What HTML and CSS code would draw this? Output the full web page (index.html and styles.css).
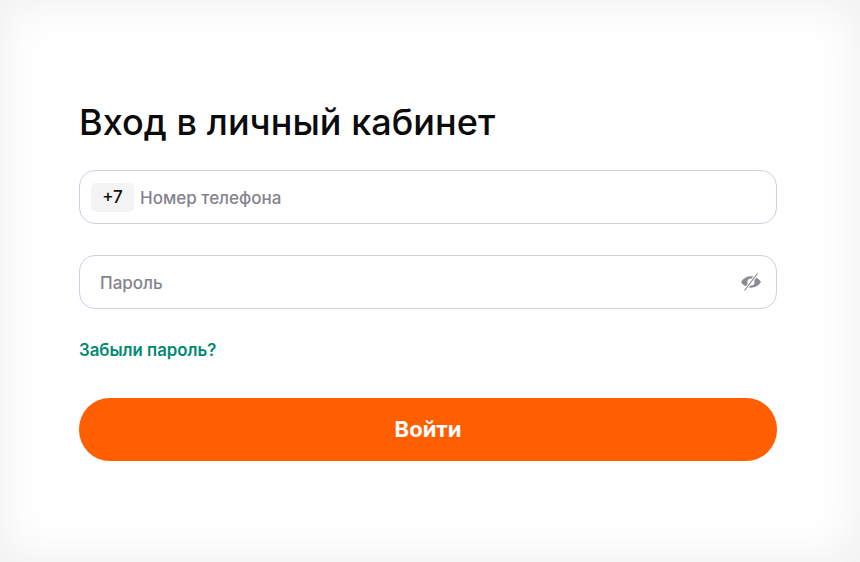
FILE: index.html
```html
<html><head>
    <title>Вход в личный кабинет</title>
    <meta charset="UTF-8">
    <meta name="viewport" content="width=device-width, initial-scale=1">
    <link rel="stylesheet" href="styles.css">
</head>
<body>
  <div class="wrap">
    <h1>Вход в личный кабинет</h1>
    <div class="field">
      <span class="code">+7</span>
      <span class="ph">Номер телефона</span>
    </div>
    <div class="field field-pass">
      <span class="ph">Пароль</span>
      <svg class="eye" width="22" height="20" viewBox="0 0 22 20">
        <path fill="#8a8a94" fill-rule="evenodd" d="M1 10C3.4 6.3 6.9 4.3 11 4.3S18.600 6.300 21 10C18.600 13.700 15.100 15.700 11 15.700S3.400 13.700 1 10ZM11 6.400A3.600 3.600 0 1 0 11 13.600A3.600 3.600 0 1 0 11 6.400Z"/>
        <path stroke="#fff" stroke-width="3" d="M4 19L18 1"/>
        <path stroke="#8a8a94" stroke-width="1.200" d="M4.500 18.500L17.500 1.500"/>
      </svg>
    </div>
    <a class="forgot" href="#">Забыли пароль?</a>
    <button type="button" class="login">Войти</button>
  </div>
</body></html>
```

FILE: styles.css
```css
html, body {
  margin: 0;
  height: 100%;
}
body {
  background: #fff;
  box-shadow: inset 0 0 50px rgba(0, 0, 0, 0.07);
  font-family: "Inter", "Noto Sans", sans-serif;
  overflow: hidden;
}
.wrap {
  display: flex;
  flex-direction: column;
  padding: 100px 83px 0 79px;
}
h1 {
  margin: 0 0 26px;
  font-size: 36px;
  line-height: 44px;
  font-weight: 500;
  letter-spacing: 0.05px;
  color: #0b0b0b;
}
.field {
  display: flex;
  align-items: center;
  height: 54px;
  box-sizing: border-box;
  border: 1.5px solid #d0cee6;
  border-radius: 16px;
  padding: 0 14.500px 0 11px;
  margin-bottom: 31px;
  background: #fff;
}
.field-pass {
  justify-content: space-between;
  padding-left: 20px;
}
.code {
  width: 43px;
  height: 29px;
  line-height: 29px;
  text-align: center;
  background: #f4f4f4;
  border-radius: 5px;
  font-size: 17px;
  font-weight: 500;
  color: #111;
  margin-right: 6px;
}
.ph {
  font-size: 17px;
  font-weight: 500;
  padding-top: 1px;
  color: #84848e;
}
.forgot {
  font-size: 16.800px;
  line-height: 20px;
  font-weight: 600;
  color: #008a72;
  text-decoration: none;
  margin-bottom: 38px;
}
.login {
  height: 63px;
  border: 0;
  border-radius: 31px;
  padding-bottom: 3px;
  background: #ff5f00;
  color: #fff;
  font-family: inherit;
  font-size: 22px;
  font-weight: 700;
}
```
